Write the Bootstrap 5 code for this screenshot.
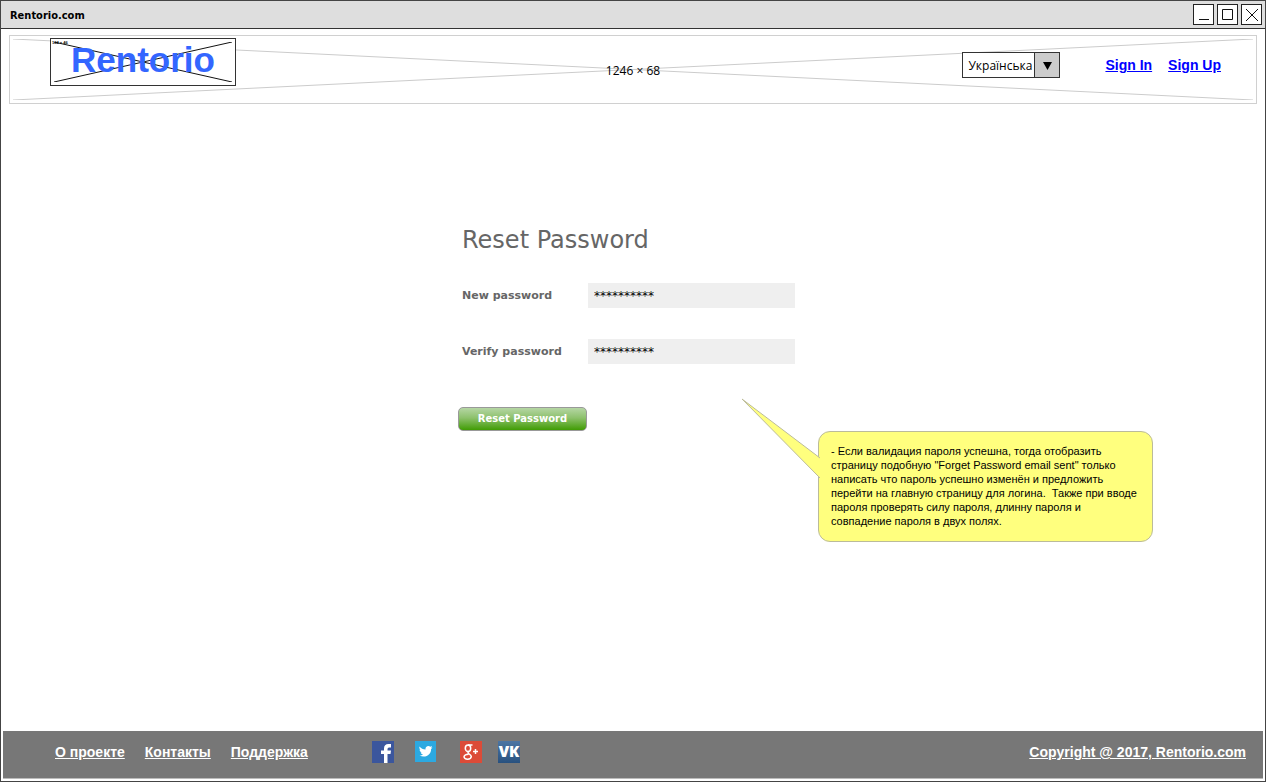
<!DOCTYPE html>
<html lang="uk">
<head>
<meta charset="utf-8">
<meta name="viewport" content="width=device-width, initial-scale=1">
<title>Rentorio.com</title>
<link href="https://cdn.jsdelivr.net/npm/bootstrap@5.3.0/dist/css/bootstrap.min.css" rel="stylesheet">
<style>
  body { font-family: "Liberation Sans", Arial, sans-serif; font-size: 14px; color: #000; background: #fff; }
  .window { border: 1px solid #444; padding-bottom: 2px; }
  .titlebar { height: 28px; background: #dedede; border-bottom: 1px solid #333; padding: 0 3px 0 9px; }
  .titlebar h1 { font: bold 11px/16px "DejaVu Sans Condensed", "DejaVu Sans", sans-serif; padding-top: 2px; }
  .win-btn { width: 21px; height: 21px; border: 1px solid #222; background: #fff; }
  .win-btn svg { display: block; }
  .banner { margin: 6px 8px 0; height: 69px; border: 1px solid #d0d0d0; padding: 2px 35px 0 40px; }
  .cross { inset: 3px; width: calc(100% - 6px); height: calc(100% - 6px); }
  .banner-size { inset: 0; font: 12px/69px "Open Sans", sans-serif; pointer-events: none; }
  .logo { width: 186px; height: 48px; border: 1px solid #333; background: #fff; color: #36f; font-size: 35px; line-height: 42px; }
  .logo:hover { color: #36f; }
  .logo-size { left: 1px; top: 1px; font-size: 4px; line-height: 6px; color: #000; }
  .lang { width: 98px; height: 26px; margin: 14px 45px 0 0; border: 1px solid #333; background: #fff; }
  .lang select { font: 12px/24px "Open Sans", sans-serif; padding: 1px 0 0 5px; border: 0; background: transparent; appearance: none; color: #000; }
  .lang-arrow { right: 0; top: 0; width: 25px; height: 24px; background: #ccc; border-left: 1px solid #333; pointer-events: none; }
  .auth { margin-top: 17px; line-height: 20px; }
  .auth a { color: #00f; }
  .reset-area { padding-top: 118px; }
  .reset-form { width: 350px; font-family: "DejaVu Sans", Verdana, sans-serif; color: #666; }
  .reset-form h2 { font-size: 24px; line-height: 36px; margin: 0 0 25px 4px; }
  .field { margin: 0 0 31px 4px; }
  .field label { width: 126px; font-size: 11px; font-weight: bold; padding-top: 2px; }
  .field input { width: 207px; height: 25px; border: 0; background: #efefef; padding: 0 6px; font-size: 12px; color: #000; }
  .btn-reset { width: 129px; height: 24px; margin-top: 43px; padding: 0; border: 1px solid #999; border-radius: 5px; background: linear-gradient(#b5d6a4, #8dc16c 45%, #409c04); color: #fff; font-size: 10px; line-height: 22px; font-weight: bold; }
  .btn-reset:hover { color: #fff; border-color: #777; }
  .note { width: 335px; min-height: 111px; margin-right: 112px; padding: 12px 8px 12px 12px; border: 1px solid #bbbb9a; border-radius: 12px; background: #ffff7e; font-size: 11px; line-height: 14px; }
  .note-tail { left: -78px; top: -34px; }
  .site-footer { margin: 0 2px; height: 48px; background: #777; border-bottom: 1px solid #bbb; padding: 0 17px 0 52px; }
  .site-footer a { color: #fff; line-height: 20px; }
  .footer-links { gap: 20px; padding-top: 11px; width: 317px; }
  .social { padding-top: 10px; }
  .social svg { display: block; }
</style>
</head>
<body>
<div class="window d-flex flex-column min-vh-100">
  <div class="titlebar d-flex align-items-center justify-content-between">
    <h1 class="m-0">Rentorio.com</h1>
    <div class="d-flex" style="gap:3px">
      <button type="button" class="win-btn p-0" aria-label="Minimize"><svg width="19" height="19" stroke="#111" fill="none"><path d="M5 14.5h10"/></svg></button>
      <button type="button" class="win-btn p-0" aria-label="Maximize"><svg width="19" height="19" stroke="#111" fill="none"><path d="M4.500 4.500h10v10h-10z"/></svg></button>
      <button type="button" class="win-btn p-0" aria-label="Close"><svg width="19" height="19" stroke="#111" fill="none"><path d="M4 4l12 12M16 4L4 16"/></svg></button>
    </div>
  </div>

  <header class="banner position-relative d-flex align-items-start justify-content-between">
    <svg class="cross position-absolute" viewBox="0 0 100 100" preserveAspectRatio="none" fill="none" stroke="#ccc"><path vector-effect="non-scaling-stroke" d="M0 0L100 100M0 100L100 0"/></svg>
    <div class="banner-size position-absolute text-center">1246 × 68</div>
    <a href="#" class="logo position-relative text-center fw-bold text-decoration-none">
      <svg class="cross position-absolute" viewBox="0 0 100 100" preserveAspectRatio="none" fill="none" stroke="#111"><path vector-effect="non-scaling-stroke" d="M0 0L100 100M0 100L100 0"/></svg>
      <span class="logo-size position-absolute">184 × 46</span>
      <span class="position-relative">Rentorio</span>
    </a>
    <div class="d-flex position-relative">
      <div class="lang position-relative">
        <select class="w-100 h-100 d-block" aria-label="Мова"><option>Українська</option></select>
        <span class="lang-arrow position-absolute"><svg class="d-block" width="24" height="24"><path d="M8 9h9l-4.500 8z"/></svg></span>
      </div>
      <nav class="auth d-flex gap-3 fw-bold"><a href="#">Sign In</a><a href="#">Sign Up</a></nav>
    </div>
  </header>

  <main class="reset-area flex-grow-1">
    <form class="reset-form mx-auto">
      <h2 class="fw-normal">Reset Password</h2>
      <div class="field d-flex align-items-center">
        <label for="new-password">New password</label>
        <input id="new-password" type="text" value="**********" autocomplete="off">
      </div>
      <div class="field d-flex align-items-center">
        <label for="verify-password">Verify password</label>
        <input id="verify-password" type="text" value="**********" autocomplete="off">
      </div>
      <button type="button" class="btn btn-reset d-block">Reset Password</button>
    </form>
    <aside class="note position-relative ms-auto">
      <svg class="note-tail position-absolute" width="79" height="80"><path d="M79 60L1 1L79 80" fill="#ffff7e" stroke="#bbbb9a"/></svg>
      - Если валидация пароля успешна, тогда отобразить<br>страницу подобную "Forget Password email sent" только<br>написать что пароль успешно изменён и предложить<br>перейти на главную страницу для логина.&nbsp; Также при вводе<br>пароля проверять силу пароля, длинну пароля и<br>совпадение пароля в двух полях.
    </aside>
  </main>

  <footer class="site-footer d-flex align-items-start">
    <nav class="footer-links d-flex fw-bold"><a href="#">О проекте</a><a href="#">Контакты</a><a href="#">Поддержка</a></nav>
    <div class="social d-flex">
      <a href="#" class="me-3" aria-label="Facebook"><svg width="23" height="22"><path fill="#3b569d" d="M0 0h22v22H0z"/><path fill="#fff" d="M12 22v-9H9V9.500h3V7.500Q12 3 16.500 3H19v3.500h-2Q15.500 6.500 15.500 8v1.500H19l-.5 3.500h-3v9z"/></svg></a>
      <a href="#" class="me-4" aria-label="Twitter"><svg class="ms-1" width="21" height="21"><path fill="#2ca9e1" d="M0 0h21v21H0z"/><path fill="#fff" d="M4.500 5.500c1.500 2 3.500 2.800 6 3-.5-3 3-4.500 4.800-2.700l1.800-.7-1 1.600 1.400-.3-1.400 1.500c.2 5.500-5.200 9.500-11.600 6.600 1.500 0 2.700-.4 3.500-1.100-1.300-.1-2-.9-2.300-1.900h1.100C5.300 11 4.600 10 4.600 8.600l1.100.3C4.400 7.900 4.100 6.800 4.500 5.500z"/></svg></a>
      <a href="#" class="me-3" aria-label="Google Plus"><svg width="22" height="22"><path fill="#dc4b38" d="M0 0h22v22H0z"/><g fill="none" stroke="#fff" stroke-width="1.500"><ellipse cx="8" cy="7.300" rx="2.700" ry="3.300"/><path d="M8 4h4.500M9 10.500q-2 1.300 0 2.300t2.300 2.700q-.3 2.700-3.700 2.700T4 15.800q.3-2.300 4.500-2.600M13 10.500h5M15.500 8v5"/></g></svg></a>
      <a href="#" aria-label="VK"><svg width="22" height="22"><defs><linearGradient id="vk" x2="0" y2="1"><stop stop-color="#4c75a3"/><stop offset="1" stop-color="#28517f"/></linearGradient></defs><path fill="url(#vk)" d="M0 0h22v22H0z"/><text x="11" y="16" text-anchor="middle" fill="#fff" font-family="Open Sans, sans-serif" font-size="15" font-weight="800">VK</text></svg></a>
    </div>
    <a href="#" class="ms-auto fw-bold" style="margin-top:11px">Copyright @ 2017, Rentorio.com</a>
  </footer>
</div>
<script src="https://cdn.jsdelivr.net/npm/bootstrap@5.3.0/dist/js/bootstrap.bundle.min.js"></script>
</body>
</html>
